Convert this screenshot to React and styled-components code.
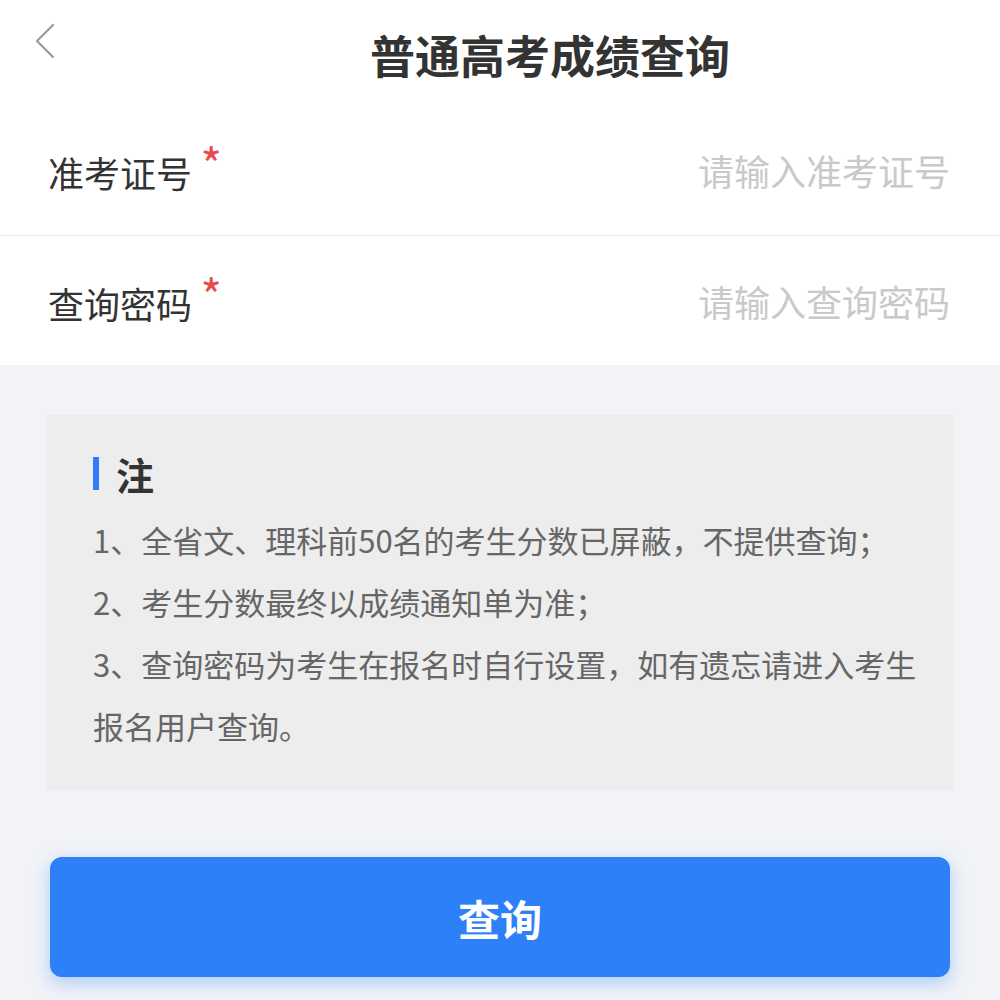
import React from 'react';
import styled, { createGlobalStyle } from 'styled-components';

const GlobalStyle = createGlobalStyle`
  html, body {
    margin: 0;
    padding: 0;
    background: #f1f3f7;
    font-family: "Noto Sans CJK SC", "Noto Sans", "Liberation Sans", sans-serif;
  }
`;

const notes = [
  '1、全省文、理科前50名的考生分数已屏蔽，不提供查询；',
  '2、考生分数最终以成绩通知单为准；',
  '3、查询密码为考生在报名时自行设置，如有遗忘请进入考生报名用户查询。',
];

function App() {
  return (
    <Page>
      <GlobalStyle />
      <Header>
        <BackButton aria-label="返回">
          <svg width="24" height="36" viewBox="0 0 24 36" fill="none">
            <path d="M20 2 L4 18 L20 34" stroke="#9a9a9a" strokeWidth="2.2" strokeLinecap="round" strokeLinejoin="round" />
          </svg>
        </BackButton>
        <Title>普通高考成绩查询</Title>
      </Header>

      <Form>
        <Field>
          <Label>
            准考证号<Star>*</Star>
          </Label>
          <Input placeholder="请输入准考证号" />
        </Field>
        <Field last>
          <Label>
            查询密码<Star>*</Star>
          </Label>
          <Input type="password" placeholder="请输入查询密码" />
        </Field>
      </Form>

      <Body>
        <NoteCard>
          <NoteTitle>
            <Bar />
            注
          </NoteTitle>
          {notes.map(n => (
            <NoteLine key={n}>{n}</NoteLine>
          ))}
        </NoteCard>
        <SubmitButton>查询</SubmitButton>
      </Body>
    </Page>
  );
}

export default App;

const Page = styled.div`
  width: 1000px;
  min-height: 1000px;
  background: #f1f3f7;
`;

const Header = styled.div`
  position: relative;
  height: 105px;
  background: #fff;
  display: flex;
  align-items: center;
  padding-left: 100px;
  box-sizing: border-box;
`;

const BackButton = styled.div`
  position: absolute;
  left: 33px;
  top: 23px;
  width: 24px;
  height: 36px;
`;

const Title = styled.h1`
  flex: 1;
  margin: 0;
  text-align: center;
  font-size: 45px;
  font-weight: 700;
  color: #333;
  line-height: 1;
  padding-top: 4px;
`;

const Form = styled.div`
  background: #fff;
`;

const Field = styled.label`
  display: flex;
  align-items: center;
  justify-content: space-between;
  height: ${p => (p.last ? '129px' : '130px')};
  padding: 0 50px 0 48px;
  border-bottom: ${p => (p.last ? 'none' : '1px solid #ececec')};
  box-sizing: content-box;
`;

const Label = styled.span`
  position: relative;
  font-size: 36px;
  color: #333;
  padding-top: 4px;
  white-space: nowrap;
`;

const Star = styled.span`
  position: absolute;
  top: -2px;
  right: -30px;
  color: #e84b4b;
  font-size: 46px;
  line-height: 1;
`;

const Input = styled.input`
  flex: 1;
  min-width: 0;
  margin-left: 60px;
  border: none;
  outline: none;
  background: transparent;
  text-align: right;
  font-family: inherit;
  font-size: 36px;
  color: #333;
  padding: 0;

  &::placeholder {
    color: #c9c9c9;
  }
`;

const Body = styled.div`
  padding: 50px 47px 40px;
`;

const NoteCard = styled.div`
  background: #ededed;
  padding: 38px 22px 33px 46px;
`;

const NoteTitle = styled.div`
  display: flex;
  align-items: center;
  height: 40px;
  margin-bottom: 16px;
  font-size: 38px;
  font-weight: 700;
  color: #333;
`;

const Bar = styled.span`
  width: 6px;
  height: 33px;
  margin-right: 17px;
  background: #2f7cf6;
`;

const NoteLine = styled.p`
  margin: 0;
  font-size: 31px;
  line-height: 62px;
  color: #666;
`;

const SubmitButton = styled.button`
  display: block;
  width: 900px;
  height: 120px;
  margin: 67px auto 0;
  border: none;
  border-radius: 12px;
  background: #2e80f8;
  box-shadow: 0 6px 18px rgba(46, 128, 248, 0.35);
  color: #fff;
  font-family: inherit;
  font-size: 42px;
  font-weight: 700;
  cursor: pointer;
`;
